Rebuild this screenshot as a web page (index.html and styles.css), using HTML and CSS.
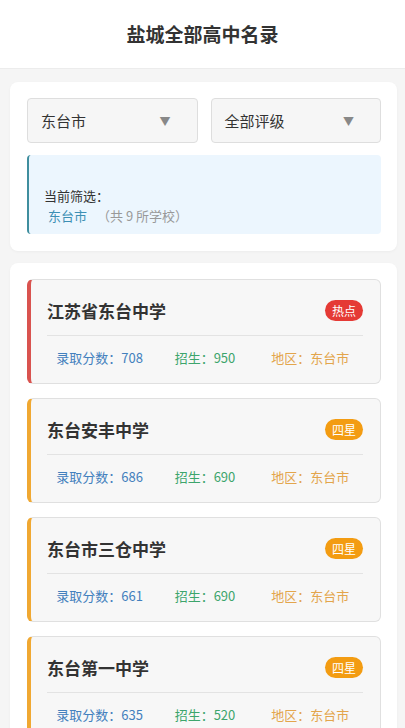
FILE: index.html
```html
<!DOCTYPE html>
<html lang="zh">
<head>
    <meta charset="UTF-8">
    <title>盐城全部高中名录</title>
    <link rel="stylesheet" href="styles.css">
</head>
<body>
<div class="header">盐城全部高中名录</div>

<div class="panel filter">
    <div class="selects">
        <div class="select"><span>东台市</span><span class="arrow">▼</span></div>
        <div class="select"><span>全部评级</span><span class="arrow">▼</span></div>
    </div>
    <div class="info">
        <div class="blank"></div>
        <div>当前筛选：</div>
        <div><span class="city">东台市</span><span class="count">（共 9 所学校）</span></div>
    </div>
</div>

<div class="panel list">
    <div class="school hot">
        <div class="top">
            <span class="name">江苏省东台中学</span>
            <span class="tag red">热点</span>
        </div>
        <div class="stats">
            <span class="score">录取分数：708</span>
            <span class="plan">招生：950</span>
            <span class="area">地区：东台市</span>
        </div>
    </div>
    <div class="school star">
        <div class="top">
            <span class="name">东台安丰中学</span>
            <span class="tag orange">四星</span>
        </div>
        <div class="stats">
            <span class="score">录取分数：686</span>
            <span class="plan">招生：690</span>
            <span class="area">地区：东台市</span>
        </div>
    </div>
    <div class="school star">
        <div class="top">
            <span class="name">东台市三仓中学</span>
            <span class="tag orange">四星</span>
        </div>
        <div class="stats">
            <span class="score">录取分数：661</span>
            <span class="plan">招生：690</span>
            <span class="area">地区：东台市</span>
        </div>
    </div>
    <div class="school star">
        <div class="top">
            <span class="name">东台第一中学</span>
            <span class="tag orange">四星</span>
        </div>
        <div class="stats">
            <span class="score">录取分数：635</span>
            <span class="plan">招生：520</span>
            <span class="area">地区：东台市</span>
        </div>
    </div>
</div>
</body>
</html>
```

FILE: styles.css
```css
* {
    margin: 0;
    padding: 0;
    box-sizing: border-box;
}

body {
    background-color: #f5f5f5;
    font-family: "Noto Sans CJK SC", "Noto Sans", sans-serif;
    color: #333;
    padding-bottom: 20px;
}

.header {
    height: 69px;
    line-height: 68px;
    background-color: #fff;
    border-bottom: 1px solid #ececec;
    text-align: center;
    font-size: 19px;
    font-weight: bold;
    color: #333;
}

.panel {
    background-color: #fff;
    border-radius: 8px;
    margin: 0 8px 0 10px;
    box-shadow: 0 1px 3px rgba(0, 0, 0, 0.04);
}

.filter {
    margin-top: 13px;
    padding: 16px 16px 17px 17px;
}

.selects {
    display: flex;
    gap: 13px;
}

.select {
    flex: 1;
    height: 45px;
    display: flex;
    align-items: center;
    justify-content: space-between;
    padding: 0 26px 0 13px;
    background-color: #f6f6f6;
    border: 1px solid #dedede;
    border-radius: 4px;
    font-size: 15px;
    color: #333;
}

.arrow {
    font-size: 11px;
    color: #888;
}

.info {
    margin-top: 12px;
    padding: 11px 14px 8px 15px;
    background-color: #ecf6fe;
    border-left: 2px solid #3f8e9e;
    border-radius: 4px;
    font-size: 13px;
    line-height: 20px;
    color: #333;
}

.info .blank {
    height: 20px;
}

.city {
    color: #3d8fb4;
    margin-left: 4px;
}

.count {
    color: #999;
    margin-left: 10px;
}

.list {
    margin-top: 12px;
    padding: 16px 16px 16px 17px;
}

.school {
    background-color: #f7f7f7;
    border: 1px solid #e0e0e0;
    border-left: 4px solid #d9534f;
    border-radius: 6px;
    padding: 18px 17px 15px 16px;
    margin-bottom: 14px;
}

.school.star {
    border-left-color: #f0a832;
}

.top {
    display: flex;
    justify-content: space-between;
    align-items: center;
    height: 24px;
    margin-bottom: 13px;
}

.name {
    font-size: 17px;
    font-weight: bold;
    color: #333;
}

.tag {
    height: 21px;
    line-height: 21px;
    padding: 0 7px;
    border-radius: 11px;
    font-size: 12px;
    color: #fff;
}

.tag.red {
    background-color: #e53a35;
}

.tag.orange {
    background-color: #f39c12;
}

.stats {
    display: flex;
    border-top: 1px solid #e3e3e3;
    padding-top: 12px;
    font-size: 13px;
    line-height: 20px;
}

.stats span {
    flex: 1;
    text-align: center;
}

.score {
    color: #4380bd;
}

.plan {
    color: #3da56c;
}

.area {
    color: #e3a54c;
}
```
